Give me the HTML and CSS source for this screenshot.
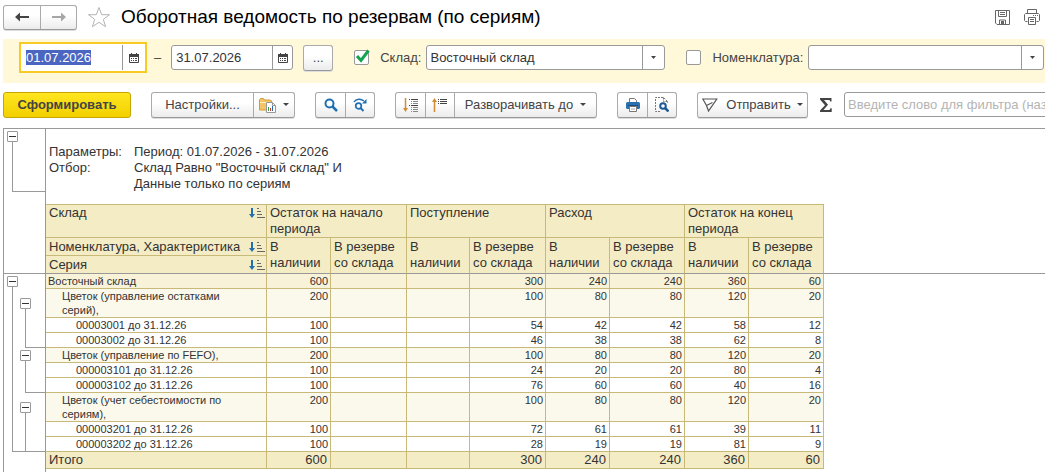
FILE: index.html
```
<!DOCTYPE html>
<html lang="ru">
<head>
    <meta charset="UTF-8">
    <meta name="viewport" content="width=device-width, initial-scale=1.0">
    <title>Оборотная ведомость по резервам (по сериям)</title>
    <link rel="stylesheet" href="styles.css">
</head>
<body>
    <header class="header">
        <div class="group nav">
            <button type="button" class="btn" aria-label="Назад">
                <svg width="14" height="10" viewBox="0 0 14 10"><path d="M0 5l5-4.500v3.500h9v2H5v3.500z" fill="#444"/></svg>
            </button>
            <button type="button" class="btn" aria-label="Вперед">
                <svg width="14" height="10" viewBox="0 0 14 10"><path d="M14 5L9 .5V4H0v2h9v3.500z" fill="#a6a6a6"/></svg>
            </button>
        </div>
        <button type="button" class="icon-btn" aria-label="В избранное">
            <svg width="24" height="22" viewBox="0 0 24 22"><path d="M12 1.500l2.700 7.200h7.800l-6.200 4.700 2.300 7.300L12 16.300l-6.600 4.400 2.300-7.300L1.500 8.700h7.800z" fill="#fff" stroke="#b4b4b4"/></svg>
        </button>
        <h1 class="title">Оборотная ведомость по резервам (по сериям)</h1>
        <button type="button" class="icon-btn" aria-label="Сохранить">
            <svg width="15" height="15" viewBox="0 0 15 15" fill="none" stroke="#666"><path d="M.5.5h14v14H2L.5 13zM3.500.5v6h8v-6M5 2.500h5M5 4.500h5M4.500 14v-4h6v4" /><path d="M6 11h3v3H6z" fill="#666" stroke="none"/></svg>
        </button>
        <button type="button" class="icon-btn" aria-label="Печать">
            <svg width="16" height="16" viewBox="0 0 16 16" fill="none" stroke="#666"><path d="M3.500 4.500v-4h9v4M3.500 12.500h-2l-1-1v-6l1-1h13l1 1v6l-1 1h-2M4.500 8.500h7v7h-7zM6 10.500h4M6 12.500h4M9 6.500h1M11 6.500h1M13 6.500h1"/></svg>
        </button>
    </header>

    <form class="filters">
        <div class="date date-active">
            <input type="text" id="dateFrom" value="01.07.2026" aria-label="Начало периода">
            <button type="button" aria-label="Выбрать дату">
                <svg width="10" height="10" viewBox="0 0 10 10"><path d="M.5 1.500h9v8h-9z" fill="#fff" stroke="#444"/><path d="M0 1h10v3H0zM2 0h1v1H2zM7 0h1v1H7zM2 5h1v1H2zM4 5h1v1H4zM6 5h2v1H6zM2 7h1v1H2zM4 7h1v1H4zM6 7h2v1H6z" fill="#444"/></svg>
            </button>
        </div>
        <span class="dash">–</span>
        <div class="date">
            <input type="text" id="dateTo" value="31.07.2026" aria-label="Конец периода">
            <button type="button" aria-label="Выбрать дату">
                <svg width="10" height="10" viewBox="0 0 10 10"><path d="M.5 1.500h9v8h-9z" fill="#fff" stroke="#444"/><path d="M0 1h10v3H0zM2 0h1v1H2zM7 0h1v1H7zM2 5h1v1H2zM4 5h1v1H4zM6 5h2v1H6zM2 7h1v1H2zM4 7h1v1H4zM6 7h2v1H6z" fill="#444"/></svg>
            </button>
        </div>
        <div class="group">
            <button type="button" class="btn period-btn">...</button>
        </div>
        <div class="field">
            <span class="check">
                <input type="checkbox" id="useStore" checked>
                <svg width="16" height="14" viewBox="0 0 16 14"><path d="M2 7l4 4.500L13.500 1.500" fill="none" stroke="#16a34e" stroke-width="3"/></svg>
            </span>
            <label for="useStore">Склад:</label>
            <span class="combo">
                <select aria-label="Склад"><option>Восточный склад</option></select>
                <svg width="5" height="3" viewBox="0 0 5 3"><path d="M0 0h5L2.500 3z" fill="#444"/></svg>
            </span>
        </div>
        <div class="field field-wide">
            <span class="check">
                <input type="checkbox" id="useItem">
                <svg width="16" height="14" viewBox="0 0 16 14"><path d="M2 7l4 4.500L13.500 1.500" fill="none" stroke="#16a34e" stroke-width="3"/></svg>
            </span>
            <label for="useItem">Номенклатура:</label>
            <span class="combo">
                <select aria-label="Номенклатура"><option></option></select>
                <svg width="5" height="3" viewBox="0 0 5 3"><path d="M0 0h5L2.500 3z" fill="#444"/></svg>
            </span>
        </div>
    </form>

    <div class="toolbar">
        <button type="button" class="run-btn">Сформировать</button>
        <div class="group">
            <button type="button" class="btn settings-btn">Настройки...</button>
            <button type="button" class="btn variant-btn" aria-label="Варианты отчета">
                <svg width="17" height="16" viewBox="0 0 17 16"><path d="M.5 2.500l1-1h3l1 1.500h6l1 1v9H.5z" fill="#f3c568" stroke="#d69a35"/><path d="M1 5.500h11" stroke="#fff0c0"/><path d="M7.500 5.500h6l3 3v7h-9z" fill="#fff" stroke="#999"/><path d="M13.500 5.500v3h3" fill="none" stroke="#999"/><path d="M9 10h1v4H9z" fill="#3a9a50"/><path d="M11 11h1v3h-1z" fill="#d43c2c"/><path d="M13 9h1v5h-1z" fill="#2667b0"/></svg>
                <svg class="arrow" width="6" height="3" viewBox="0 0 6 3"><path d="M0 0h6L3 3z" fill="#444"/></svg>
            </button>
        </div>
        <div class="group">
            <button type="button" class="btn tool-btn" aria-label="Найти">
                <svg width="14" height="14" viewBox="0 0 14 14" fill="none" stroke="#1f6fb2"><circle cx="5.500" cy="5.500" r="4" stroke-width="2"/><path d="M8.500 8.500L13 13" stroke-width="2.500"/></svg>
            </button>
            <button type="button" class="btn tool-btn" aria-label="Найти далее">
                <svg width="14" height="14" viewBox="0 0 14 14" fill="none" stroke="#1f6fb2"><path d="M1 4C3 .5 8 .5 11 3" stroke-width="1.500"/><path d="M13.500 1v4.500H9z" fill="#1f6fb2" stroke="none"/><circle cx="5.500" cy="8" r="2.800" stroke-width="1.700"/><path d="M7.500 10l3 3" stroke-width="2"/></svg>
            </button>
        </div>
        <div class="group">
            <button type="button" class="btn tool-btn" aria-label="Развернуть группы">
                <svg width="16" height="16" viewBox="0 0 16 16"><path d="M2.500 1v11" stroke="#d28b33" stroke-width="1.500"/><path d="M0 11h5l-2.500 4z" fill="#d28b33"/><path d="M6 2.500h1M8 2.500h7M6 8.500h1M8 8.500h7" stroke="#444"/><path d="M8 4.500h1M10 4.500h5M8 6.500h1M10 6.500h5M8 10.500h1M10 10.500h5M8 12.500h1M10 12.500h5M8 14.500h1M10 14.500h5" stroke="#888"/></svg>
            </button>
            <button type="button" class="btn tool-btn" aria-label="Свернуть группы">
                <svg width="16" height="16" viewBox="0 0 16 16"><path d="M2.500 4v11" stroke="#d28b33" stroke-width="1.500"/><path d="M0 5h5L2.500 1z" fill="#d28b33"/><path d="M6 2.500h1M8 2.500h7M6 4.500h1M8 4.500h7M6 6.500h1M8 6.500h7" stroke="#444"/></svg>
            </button>
            <button type="button" class="btn expand-btn">Разворачивать до
                <svg class="arrow" width="6" height="3" viewBox="0 0 6 3"><path d="M0 0h6L3 3z" fill="#444"/></svg>
            </button>
        </div>
        <div class="group">
            <button type="button" class="btn tool-btn" aria-label="Печать">
                <svg width="14" height="14" viewBox="0 0 14 14"><path d="M3.500 5V.5h5l2 2V5" fill="#fff" stroke="#777"/><rect y="4" width="14" height="7" rx="1.500" fill="#2b70ad"/><path d="M2 7.500h10" stroke="#164f83"/><path d="M3.500 8.500h7v5h-7z" fill="#fff" stroke="#777"/><path d="M5 11h4" stroke="#aaa"/></svg>
            </button>
            <button type="button" class="btn tool-btn" aria-label="Предварительный просмотр">
                <svg width="14" height="15" viewBox="0 0 14 15" fill="none"><path d="M5 14.500H.5V.5h8l4 4V6M8.500.5v4h4" stroke="#777" stroke-dasharray="2 1"/><circle cx="8" cy="9" r="2.800" stroke="#1d5a96" stroke-width="2"/><path d="M10 11l3.500 3.500" stroke="#1d5a96" stroke-width="2.500"/></svg>
            </button>
        </div>
        <div class="group">
            <button type="button" class="btn send-btn">
                <svg width="16" height="14" viewBox="0 0 16 14" fill="none" stroke="#555" stroke-width="1.200"><path d="M.8 1h14L6.500 13 4.500 7.500zM4.500 7.500L10.500 4.500"/></svg>
                Отправить
                <svg class="arrow" width="6" height="3" viewBox="0 0 6 3"><path d="M0 0h6L3 3z" fill="#444"/></svg>
            </button>
        </div>
        <button type="button" class="icon-btn" aria-label="Сумма">
            <svg width="12" height="14" viewBox="0 0 12 14"><path d="M0 0h11.500v3.500h-1.200L9.500 2H4l4 4.800L3.500 12h6l1-1.800h1.200V14H0v-1.500l5-5.300L0 1.500z" fill="#444"/></svg>
        </button>
        <input type="text" class="search" placeholder="Введите слово для фильтра (название товара, покупателя и пр.)" aria-label="Фильтр">
    </div>

    <main class="report">
        <table class="sheet">
            <colgroup>
                <col class="col-tree"><col class="col-branch"><col class="col-name">
                <col class="col-stock"><col class="col-reserve">
                <col class="col-income"><col class="col-reserve">
                <col class="col-stock"><col class="col-last">
                <col class="col-stock"><col class="col-last">
                <col>
            </colgroup>
            <thead>
                <tr>
                    <td class="tree edge" colspan="2"><button type="button" class="toggle" aria-label="Свернуть"></button></td>
                    <td class="params" colspan="10">
                        <dl>
                            <dt>Параметры:</dt>
                            <dd>Период: 01.07.2026 - 31.07.2026</dd>
                            <dt>Отбор:</dt>
                            <dd>Склад Равно "Восточный склад" И<br>Данные только по сериям</dd>
                        </dl>
                    </td>
                </tr>
                <tr class="spacer">
                    <td class="edge" colspan="2"></td>
                    <td class="top-line" colspan="9"></td>
                    <td></td>
                </tr>
                <tr class="head head-tall">
                    <td class="edge bottom" colspan="2" rowspan="3"></td>
                    <th><span class="sortable">Склад <svg width="16" height="10" viewBox="0 0 16 10"><path d="M2 0h2v6h2L3 10 0 6h2z" fill="#1f6fb2"/><path d="M8 .5h2M8 3.500h4M8 6.500h5M8 9.500h8" stroke="#666"/></svg></span></th>
                    <th colspan="2">Остаток на начало периода</th>
                    <th colspan="2">Поступление</th>
                    <th colspan="2">Расход</th>
                    <th colspan="2">Остаток на конец периода</th>
                    <td class="bottom" rowspan="3"></td>
                </tr>
                <tr class="head">
                    <th><span class="sortable">Номенклатура, Характеристика <svg width="16" height="10" viewBox="0 0 16 10"><path d="M2 0h2v6h2L3 10 0 6h2z" fill="#1f6fb2"/><path d="M8 .5h2M8 3.500h4M8 6.500h5M8 9.500h8" stroke="#666"/></svg></span></th>
                    <th class="bottom" rowspan="2">В наличии</th>
                    <th class="bottom" rowspan="2">В резерве со склада</th>
                    <th class="bottom" rowspan="2">В наличии</th>
                    <th class="bottom" rowspan="2">В резерве со склада</th>
                    <th class="bottom" rowspan="2">В наличии</th>
                    <th class="bottom" rowspan="2">В резерве со склада</th>
                    <th class="bottom" rowspan="2">В наличии</th>
                    <th class="bottom" rowspan="2">В резерве со склада</th>
                </tr>
                <tr class="head">
                    <th class="bottom"><span class="sortable">Серия <svg width="16" height="10" viewBox="0 0 16 10"><path d="M2 0h2v6h2L3 10 0 6h2z" fill="#1f6fb2"/><path d="M8 .5h2M8 3.500h4M8 6.500h5M8 9.500h8" stroke="#666"/></svg></span></th>
                </tr>
            </thead>
            <tbody>
                <tr class="row store">
                    <td class="tree" rowspan="10"><button type="button" class="toggle" aria-label="Свернуть"></button></td>
                    <td class="edge"></td>
                    <th>Восточный склад</th>
                    <td>600</td><td></td><td></td><td>300</td><td>240</td><td>240</td><td>360</td><td>60</td>
                </tr>
                <tr class="row item tall">
                    <td class="tree branch edge" rowspan="3"><button type="button" class="toggle" aria-label="Свернуть"></button></td>
                    <th>Цветок (управление остатками серий),</th>
                    <td>200</td><td></td><td></td><td>100</td><td>80</td><td>80</td><td>120</td><td>20</td>
                </tr>
                <tr class="row series">
                    <th>00003001 до 31.12.26</th>
                    <td>100</td><td></td><td></td><td>54</td><td>42</td><td>42</td><td>58</td><td>12</td>
                </tr>
                <tr class="row series">
                    <th>00003002 до 31.12.26</th>
                    <td>100</td><td></td><td></td><td>46</td><td>38</td><td>38</td><td>62</td><td>8</td>
                </tr>
                <tr class="row item">
                    <td class="tree branch edge" rowspan="3"><button type="button" class="toggle" aria-label="Свернуть"></button></td>
                    <th>Цветок (управление по FEFO),</th>
                    <td>200</td><td></td><td></td><td>100</td><td>80</td><td>80</td><td>120</td><td>20</td>
                </tr>
                <tr class="row series">
                    <th>000003101 до 31.12.26</th>
                    <td>100</td><td></td><td></td><td>24</td><td>20</td><td>20</td><td>80</td><td>4</td>
                </tr>
                <tr class="row series">
                    <th>000003102 до 31.12.26</th>
                    <td>100</td><td></td><td></td><td>76</td><td>60</td><td>60</td><td>40</td><td>16</td>
                </tr>
                <tr class="row item tall">
                    <td class="tree branch branch-last edge" rowspan="3"><button type="button" class="toggle" aria-label="Свернуть"></button></td>
                    <th>Цветок (учет себестоимости по сериям),</th>
                    <td>200</td><td></td><td></td><td>100</td><td>80</td><td>80</td><td>120</td><td>20</td>
                </tr>
                <tr class="row series">
                    <th>000003201 до 31.12.26</th>
                    <td>100</td><td></td><td></td><td>72</td><td>61</td><td>61</td><td>39</td><td>11</td>
                </tr>
                <tr class="row series">
                    <th>000003202 до 31.12.26</th>
                    <td>100</td><td></td><td></td><td>28</td><td>19</td><td>19</td><td>81</td><td>9</td>
                </tr>
            </tbody>
            <tfoot>
                <tr class="row total">
                    <td class="edge" colspan="2"></td>
                    <th>Итого</th>
                    <td>600</td><td></td><td></td><td>300</td><td>240</td><td>240</td><td>360</td><td>60</td>
                </tr>
                <tr class="tail">
                    <td class="edge" colspan="2"></td>
                </tr>
            </tfoot>
        </table>
    </main>

    <script>
        const dateFrom = document.getElementById('dateFrom');
        dateFrom.focus();
        dateFrom.select();
    </script>
</body>
</html>
```
FILE: styles.css
```
* {
    box-sizing: border-box;
}
body {
    margin: 0;
    padding-left: 3px;
    min-height: 100vh;
    display: flex;
    flex-direction: column;
    overflow-x: hidden;
    background: #fff;
    color: #333;
    font-family: "Liberation Sans", Arial, sans-serif;
    font-size: 13px;
}
button, input, select {
    font: inherit;
    color: inherit;
    margin: 0;
}
button {
    padding: 0;
    border: none;
    background: none;
    cursor: pointer;
}
svg {
    display: block;
    flex: none;
}

/* header */
.header {
    display: flex;
    align-items: center;
    height: 39px;
    padding: 0 5px 5px 0;
    gap: 10px;
}
.title {
    flex: 1;
    margin: 0;
    font-size: 19px;
    font-weight: normal;
    color: #000;
    white-space: nowrap;
}
.header .icon-btn:last-child {
    margin-left: 4px;
}
.nav .btn {
    width: 36px;
    height: 23px;
}

/* buttons */
.group {
    display: flex;
    flex: none;
    border: 1px solid #aaa;
    border-bottom-color: #999;
    border-radius: 3px;
    background: linear-gradient(#fff 40%, #ececec);
    box-shadow: 0 1px 0 #ddd;
}
.btn {
    display: flex;
    align-items: center;
    justify-content: center;
    height: 24px;
    color: #444;
    white-space: nowrap;
}
.btn + .btn {
    border-left: 1px solid #aaa;
}
.icon-btn {
    flex: none;
}

/* filters */
.filters {
    display: flex;
    align-items: center;
    height: 44px;
    padding: 0 1px 7px 16px;
    background: #fff9d9;
    color: #444;
}
.date {
    display: flex;
    flex: none;
    width: 122px;
    height: 25px;
    border: 1px solid #999;
    border-radius: 3px;
    background: #fff;
}
.date input {
    width: 100px;
    padding: 0 0 0 4px;
    border: none;
    outline: none;
    background: none;
    color: #333;
}
.date input::selection {
    background: #4a66c0;
    color: #fff;
}
.date button {
    display: flex;
    flex: 1;
    align-items: center;
    justify-content: center;
    border-left: 1px solid #999;
}
.date-active {
    width: 128px;
    height: 31px;
    padding: 1px;
    border: 2px solid #f7ca26;
    border-radius: 0;
}
.dash {
    padding: 0 10px 0 7px;
}
.filters .group {
    margin-left: 10px;
}
.period-btn {
    width: 28px;
}
.field {
    display: flex;
    flex: none;
    align-items: center;
    margin-left: 21px;
}
.field-wide {
    flex: 1;
    min-width: 0;
}
.check {
    position: relative;
    margin-right: 11px;
}
.check input {
    display: block;
    appearance: none;
    width: 15px;
    height: 15px;
    border: 1px solid #999;
    border-radius: 2px;
    background: #fff;
}
.check svg {
    position: absolute;
    left: 1px;
    top: -1px;
    display: none;
    pointer-events: none;
}
.check input:checked + svg {
    display: block;
}
.combo {
    position: relative;
    flex: none;
    margin-left: 5px;
    width: 239px;
}
.field-wide .combo {
    flex: 1;
    min-width: 0;
}
.combo select {
    display: block;
    appearance: none;
    width: 100%;
    height: 25px;
    padding: 0 24px 0 3px;
    border: 1px solid #999;
    border-radius: 3px;
    color: #333;
    background: linear-gradient(#999, #999) right 21px top / 1px 100% no-repeat #fff;
}
.combo svg {
    position: absolute;
    right: 9px;
    top: 11px;
    pointer-events: none;
}

/* toolbar */
.toolbar {
    display: flex;
    align-items: center;
    gap: 20px;
    height: 45px;
    padding-bottom: 2px;
    overflow: hidden;
}
.run-btn {
    flex: none;
    width: 128px;
    height: 26px;
    border: 1px solid #c4a600;
    border-radius: 3px;
    background: linear-gradient(#ffe620, #f2d000);
    color: #444;
    font-weight: bold;
}
.settings-btn {
    width: 101px;
}
.variant-btn {
    width: 41px;
}
.tool-btn {
    width: 29px;
}
.tool-btn + .expand-btn {
    width: 142px;
}
.send-btn {
    width: 109px;
    gap: 8px;
}
.arrow {
    margin-left: 7px;
}
.send-btn .arrow {
    margin-left: -2px;
}
.toolbar > .icon-btn {
    margin: 0 -8px;
}
.search {
    flex: none;
    width: 260px;
    height: 25px;
    padding: 0 3px;
    border: 1px solid #999;
    border-radius: 3px;
}
.search::placeholder {
    color: #b4b4b4;
}

/* report */
.report {
    flex: 1;
    border-top: 1px solid #999;
    border-left: 1px solid #999;
}
.sheet {
    width: 100%;
    table-layout: fixed;
    border-collapse: separate;
    border-spacing: 0;
}
.col-tree { width: 14px; }
.col-branch { width: 28px; }
.col-name { width: 221px; }
.col-stock { width: 64px; }
.col-reserve { width: 76px; }
.col-income { width: 63px; }
.col-last { width: 75px; }
.sheet td, .sheet th {
    padding: 0;
    font-weight: normal;
    text-align: left;
    vertical-align: top;
}
.sheet .edge {
    border-right: 1px solid #999;
}

/* group bracket: vertical line and its foot */
.sheet .tree {
    padding: 2px 0 0 3px;
    background:
        linear-gradient(#999, #999) 8px 8px / 1px 100% no-repeat,
        linear-gradient(#999, #999) 8px 100% / 100% 1px no-repeat;
}
.sheet .branch {
    padding-left: 2px;
    background-position: 7px 8px, 7px 100%;
}
.sheet .tall .branch {
    padding-top: 9px;
    background-position: 7px 16px, 7px 100%;
}
.sheet .tall .branch-last {
    background-position: 7px 16px, 0 100%;
}
.toggle {
    display: block;
    width: 11px;
    height: 11px;
    border: 1px solid #999;
    border-radius: 1px;
    background: linear-gradient(#333, #333) center / 7px 1px no-repeat #fff;
}
.params dl {
    display: grid;
    grid-template-columns: 85px 1fr;
    margin: 0;
    padding: 15px 0 0 3px;
    line-height: 16px;
}
.params dd {
    margin: 0;
}
.spacer td {
    height: 13px;
}
.sheet .top-line {
    border-bottom: 1px solid #c8b978;
}
.head th {
    height: 18px;
    padding: 1px 0 0 3px;
    border-right: 1px solid #c8b978;
    border-bottom: 1px solid #c8b978;
    background: #f4ecc5;
    line-height: 16px;
}
.head-tall th {
    height: 33px;
    padding-top: 0;
}
.sheet .bottom {
    border-bottom: 1px solid #999;
}
.sortable {
    display: flex;
    align-items: center;
    justify-content: space-between;
    padding-right: 1px;
    white-space: nowrap;
}
.row th, .row td:not(.tree):not(.edge) {
    height: 15px;
    padding: 0 2px;
    border-right: 1px solid #c8b978;
    border-bottom: 1px solid #c8b978;
    font-size: 11px;
    line-height: 14px;
}
.row td:not(.tree):not(.edge) {
    text-align: right;
}
.store th, .store td:not(.tree):not(.edge) {
    background: #f8f2d8;
}
.item th, .item td:not(.tree):not(.edge) {
    background: #fbf9ec;
}
.row.item th {
    padding: 0 30px 0 16px;
}
.row.series th {
    padding-left: 30px;
}
.row.total th, .row.total td:not(.edge):not(.tree) {
    height: 17px;
    padding: 0 3px;
    background: #f4ecc5;
    font-size: 13px;
    line-height: 16px;
}
.tail td {
    height: 3px;
}
```
